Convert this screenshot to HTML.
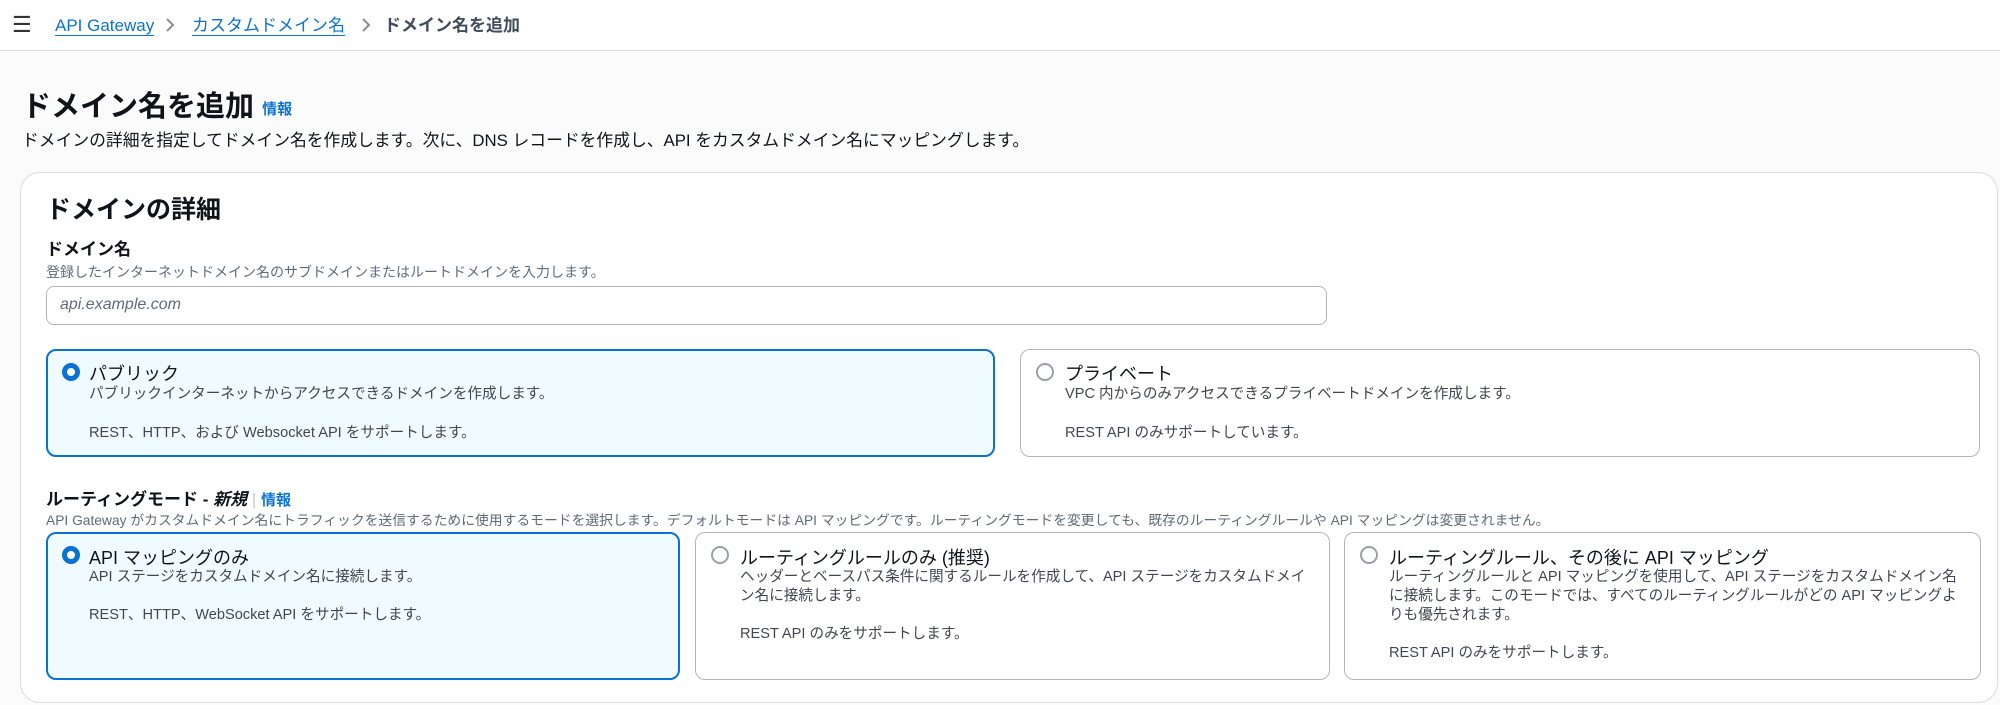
<!DOCTYPE html>
<html><head><meta charset="utf-8"><style>
*{box-sizing:border-box;margin:0;padding:0}
body{width:2000px;height:705px;overflow:hidden;background:#fbfbfb;font-family:"Liberation Sans","Noto Sans CJK JP",sans-serif;color:#0f141a;position:relative}
.a{position:absolute;white-space:nowrap}
.hdr{position:absolute;left:0;top:0;width:2000px;height:51px;background:#fff;border-bottom:1px solid #dcdcde}
a{color:#0972d3;text-decoration:underline;text-underline-offset:4px}
.bc{line-height:22px;top:15px;font-size:17px}
.box{position:absolute;border:1px solid #b4b4bb;border-radius:10px;background:#fff}
.sel{border:2px solid #0972d3;background:#f0fbff}
.r{position:absolute;width:18px;height:18px;border-radius:50%;border:2px solid #8c8c94;background:#fff}
.rs{border:5px solid #0972d3}
.t{font-size:18px;color:#0f141a}
.d{font-size:14.6px;color:#424650;line-height:19px}
</style></head><body>
<div class="hdr"></div>
<div class="a" style="left:12px;top:12px;font-size:22px;color:#333">☰</div>
<div class="a bc" style="left:55px"><a href="#">API Gateway</a></div>
<svg class="a" style="left:164px;top:17px" width="12" height="16" viewBox="0 0 12 16"><path d="M3 2 L9 8 L3 14" fill="none" stroke="#8c8c94" stroke-width="2"/></svg>
<div class="a bc" style="left:192px"><a href="#">カスタムドメイン名</a></div>
<svg class="a" style="left:360px;top:17px" width="12" height="16" viewBox="0 0 12 16"><path d="M3 2 L9 8 L3 14" fill="none" stroke="#8c8c94" stroke-width="2"/></svg>
<div class="a bc" style="left:384px;font-weight:bold;color:#414d5c">ドメイン名を追加</div>
<div class="a" style="left:22px;top:83px;font-size:29px;font-weight:bold">ドメイン名を追加 <span style="font-size:15px;color:#0972d3;font-weight:bold;vertical-align:middle">情報</span></div>
<div class="a" style="left:22px;top:127px;font-size:16.8px;color:#0f141a">ドメインの詳細を指定してドメイン名を作成します。次に、DNS レコードを作成し、API をカスタムドメイン名にマッピングします。</div>
<div style="position:absolute;left:20px;top:172px;width:1978px;height:531px;background:#fff;border:1px solid #dcdcde;border-radius:20px"></div>
<div class="a" style="left:46px;top:190px;font-size:25px;font-weight:bold">ドメインの詳細</div>
<div class="a" style="left:46px;top:235px;font-size:17px;font-weight:bold">ドメイン名</div>
<div class="a" style="left:46px;top:262px;font-size:14px;color:#5f6b7a">登録したインターネットドメイン名のサブドメインまたはルートドメインを入力します。</div>
<div style="position:absolute;left:46px;top:286px;width:1281px;height:39px;border:1px solid #b4b4bb;border-radius:8px;background:#fff"></div>
<div class="a" style="left:60px;top:296px;font-size:16px;color:#5f6b7a;font-style:italic">api.example.com</div>

<div class="box sel" style="left:46px;top:349px;width:949px;height:108px"></div>
<div class="r rs" style="left:62px;top:363px"></div>
<div class="a t" style="left:89px;top:360px">パブリック</div>
<div class="a d" style="left:89px;top:385px">パブリックインターネットからアクセスできるドメインを作成します。</div>
<div class="a d" style="left:89px;top:424px">REST、HTTP、および Websocket API をサポートします。</div>

<div class="box" style="left:1020px;top:349px;width:960px;height:108px"></div>
<div class="r" style="left:1036px;top:363px;border-color:#9ba0a8"></div>
<div class="a t" style="left:1065px;top:360px">プライベート</div>
<div class="a d" style="left:1065px;top:385px">VPC 内からのみアクセスできるプライベートドメインを作成します。</div>
<div class="a d" style="left:1065px;top:424px">REST API のみサポートしています。</div>

<div class="a" style="left:46px;top:485px;font-size:17px;font-weight:bold">ルーティングモード - <i>新規</i> <span style="color:#c6c6cd;font-weight:normal">|</span> <span style="font-size:15px;color:#0972d3">情報</span></div>
<div class="a" style="left:46px;top:509px;font-size:13.8px;color:#5f6b7a">API Gateway がカスタムドメイン名にトラフィックを送信するために使用するモードを選択します。デフォルトモードは API マッピングです。ルーティングモードを変更しても、既存のルーティングルールや API マッピングは変更されません。</div>

<div class="box sel" style="left:46px;top:532px;width:634px;height:148px"></div>
<div class="r rs" style="left:62px;top:546px"></div>
<div class="a t" style="left:89px;top:544px">API マッピングのみ</div>
<div class="a d" style="left:89px;top:568px">API ステージをカスタムドメイン名に接続します。</div>
<div class="a d" style="left:89px;top:606px">REST、HTTP、WebSocket API をサポートします。</div>

<div class="box" style="left:695px;top:532px;width:635px;height:148px"></div>
<div class="r" style="left:711px;top:546px;border-color:#9ba0a8"></div>
<div class="a t" style="left:740px;top:544px">ルーティングルールのみ (推奨)</div>
<div class="a d" style="left:740px;top:568px">ヘッダーとベースパス条件に関するルールを作成して、API ステージをカスタムドメイ<br>ン名に接続します。</div>
<div class="a d" style="left:740px;top:625px">REST API のみをサポートします。</div>

<div class="box" style="left:1344px;top:532px;width:637px;height:148px"></div>
<div class="r" style="left:1360px;top:546px;border-color:#9ba0a8"></div>
<div class="a t" style="left:1389px;top:544px">ルーティングルール、その後に API マッピング</div>
<div class="a d" style="left:1389px;top:568px">ルーティングルールと API マッピングを使用して、API ステージをカスタムドメイン名<br>に接続します。このモードでは、すべてのルーティングルールがどの API マッピングよ<br>りも優先されます。</div>
<div class="a d" style="left:1389px;top:644px">REST API のみをサポートします。</div>
</body></html>
